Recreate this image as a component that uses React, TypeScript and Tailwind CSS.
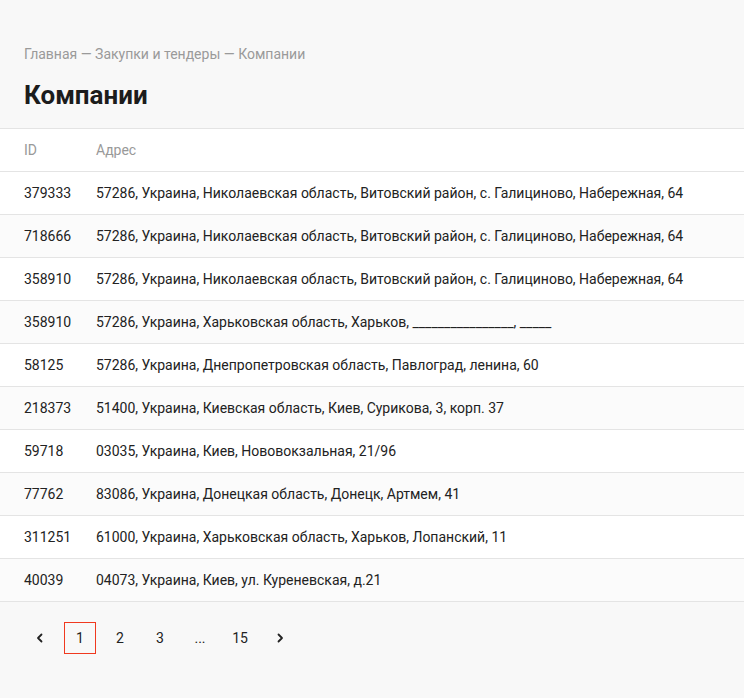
import React from 'react';

const rows = [
  { id: '379333', address: '57286, Украина, Николаевская область, Витовский район, с. Галициново, Набережная, 64' },
  { id: '718666', address: '57286, Украина, Николаевская область, Витовский район, с. Галициново, Набережная, 64' },
  { id: '358910', address: '57286, Украина, Николаевская область, Витовский район, с. Галициново, Набережная, 64' },
  { id: '358910', address: '57286, Украина, Харьковская область, Харьков, ________________, _____' },
  { id: '58125', address: '57286, Украина, Днепропетровская область, Павлоград, ленина, 60' },
  { id: '218373', address: '51400, Украина, Киевская область, Киев, Сурикова, 3, корп. 37' },
  { id: '59718', address: '03035, Украина, Киев, Нововокзальная, 21/96' },
  { id: '77762', address: '83086, Украина, Донецкая область, Донецк, Артмем, 41' },
  { id: '311251', address: '61000, Украина, Харьковская область, Харьков, Лопанский, 11' },
  { id: '40039', address: '04073, Украина, Киев, ул. Куреневская, д.21' },
];

const Chevron = ({ dir }: { dir: 'left' | 'right' }) => (
  <svg width="12" height="12" viewBox="0 0 12 12" fill="none">
    <path
      d={dir === 'left' ? 'M7.5 2.5 4 6l3.5 3.5' : 'M4.5 2.5 8 6 4.5 9.5'}
      stroke="#222"
      strokeWidth="1.8"
      strokeLinecap="round"
      strokeLinejoin="round"
    />
  </svg>
);

const App: React.FC = () => {
  return (
    <div className="min-h-[698px] bg-[#f8f8f8] font-['Roboto',sans-serif] text-[#222]">
      <div className="px-6 pt-[44px] pb-[17px] border-b border-[#e4e4e4]">
        <div className="text-[14px] leading-5 text-[#9a9a9a]">
          Главная — Закупки и тендеры — Компании
        </div>
        <h1 className="mt-[15px] text-[26px] leading-8 font-bold text-[#1c1c1c]">Компании</h1>
      </div>

      <div className="bg-white">
        <div className="flex items-center h-[43px] pt-px px-6 border-b border-[#e4e4e4] text-[14px] text-[#999]">
          <div className="w-[72px]">ID</div>
          <div>Адрес</div>
        </div>
        {rows.map((row, i) => (
          <div
            key={i}
            className={`flex items-center h-[43px] pt-px px-6 border-b border-[#e4e4e4] text-[14px] ${
              i % 2 === 1 ? 'bg-[#fbfbfb]' : 'bg-white'
            }`}
          >
            <div className="w-[72px]">{row.id}</div>
            <div>{row.address}</div>
          </div>
        ))}
      </div>

      <div className="flex items-center gap-2 px-6 pt-5 text-[14px]">
        <button className="w-8 h-8 flex items-center justify-center">
          <Chevron dir="left" />
        </button>
        <button className="w-8 h-8 flex items-center justify-center border border-[#f0391f]">1</button>
        <button className="w-8 h-8 flex items-center justify-center">2</button>
        <button className="w-8 h-8 flex items-center justify-center">3</button>
        <span className="w-8 h-8 flex items-center justify-center">...</span>
        <button className="w-8 h-8 flex items-center justify-center">15</button>
        <button className="w-8 h-8 flex items-center justify-center">
          <Chevron dir="right" />
        </button>
      </div>
    </div>
  );
};

export default App;
